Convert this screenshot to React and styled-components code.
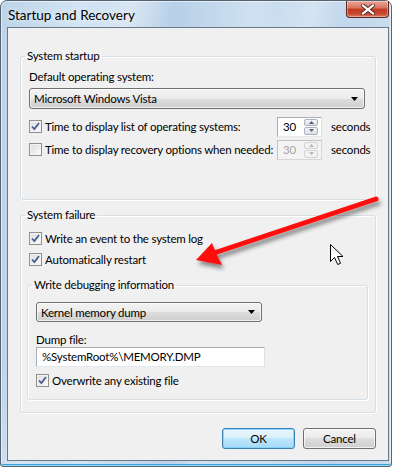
import React from 'react'
import styled, { createGlobalStyle } from 'styled-components'

const GlobalStyle = createGlobalStyle`
  html, body {
    margin: 0;
    padding: 0;
    background: #fff;
  }
  body {
    font-family: Lato, "Noto Sans", sans-serif;
    font-size: 11.5px;
    letter-spacing: -0.2px;
    color: #000;
  }
  * {
    box-sizing: border-box;
  }
`

const Page = styled.div`
  position: relative;
  width: 394px;
  height: 468px;
`

const Window = styled.div`
  width: 392px;
  height: 467px;
  display: flex;
  flex-direction: column;
  padding: 0 2px 5px 6px;
  border: 1px solid #55626f;
  border-radius: 7px 7px 3px 3px;
  background:
    linear-gradient(104deg, rgba(255,255,255,0) 18%, rgba(255,255,255,.35) 26%, rgba(255,255,255,0) 34%,
      rgba(255,255,255,0) 55%, rgba(255,255,255,.3) 62%, rgba(255,255,255,0) 70%),
    linear-gradient(90deg, #bcd3e9 0%, #d3e4f3 20%, #b8d0e8 45%, #cfe1f1 65%, #bed5eb 85%, #c9ddef 100%);
  box-shadow: inset 0 0 0 1px rgba(255,255,255,.55), inset 0 -2px 0 #2fa5dc;
`

const TitleBar = styled.div`
  height: 26px;
  display: flex;
  align-items: flex-start;
  padding-left: 1px;
`

const Title = styled.span`
  line-height: 28px;
  font-size: 13.5px;
  letter-spacing: 0;
  color: #000;
  text-shadow: 0 0 6px rgba(255,255,255,.9);
`

const CloseButton = styled.div`
  margin-left: auto;
  width: 43px;
  height: 17px;
  display: flex;
  align-items: center;
  justify-content: center;
  border: 1px solid #5a2a22;
  border-top: none;
  border-radius: 0 0 4px 4px;
  background: linear-gradient(#e9a597 0%, #d9705e 45%, #c03a22 50%, #c8472f 80%, #dc7a62 100%);
  box-shadow: inset 0 0 0 1px rgba(255,255,255,.35);
`

const Client = styled.div`
  flex: 1;
  display: flex;
  flex-direction: column;
  padding: 20px 12px 0 12px;
  border: 1px solid #6a7987;
  background: #f0f0f0;
`

const Group = styled.fieldset`
  margin: ${(p) => p.$margin || '0'};
  padding: ${(p) => p.$padding};
  min-width: 0;
  border: 1px solid #d5dfe5;
  border-radius: 3px;
  box-shadow: inset 1px 1px 0 #fff, 1px 1px 0 #fff;
  display: flex;
  flex-direction: column;
`

const Legend = styled.legend`
  margin-left: -4px;
  padding: 0 2px;
  line-height: 16px;
`

const Label = styled.div`
  line-height: ${(p) => p.$lh || 16}px;
  margin-top: ${(p) => p.$mt || 0}px;
`

const Combo = styled.div`
  width: ${(p) => p.$width}px;
  height: ${(p) => p.$height}px;
  margin-top: ${(p) => p.$mt}px;
  display: flex;
  align-items: center;
  padding: 0 6px 0 4px;
  border: 1px solid #707070;
  border-radius: 3px;
  background: linear-gradient(#f3f3f3 0%, #ebebeb 50%, #dddddd 50%, #cfcfcf 100%);
  box-shadow: inset 0 0 0 1px rgba(255,255,255,.7);
`

const ComboText = styled.span`
  flex: 1;
`

const TimeRow = styled.div`
  display: grid;
  grid-template-columns: 239px 45px auto;
  column-gap: 9px;
  align-items: center;
  height: 21px;
  margin-top: ${(p) => p.$mt}px;
`

const CheckRow = styled.label`
  display: flex;
  align-items: center;
  gap: 3px;
  height: ${(p) => p.$height || 17}px;
  margin-top: ${(p) => p.$mt || 0}px;
  white-space: nowrap;
`

const Box = styled.span`
  width: 13px;
  height: 13px;
  flex: none;
  display: flex;
  align-items: center;
  justify-content: center;
  border: 1px solid #8e8f8f;
  background: linear-gradient(135deg, #dcdcdc, #fbfbfb);
  box-shadow: inset 0 0 0 1px #f4f4f4;
`

const Spinner = styled.div`
  width: 45px;
  height: 20px;
  display: flex;
  border: 1px solid ${(p) => (p.$disabled ? '#c2c2c2' : '#abadb3')};
  border-right-color: ${(p) => (p.$disabled ? '#d6d6d6' : '#dbdfe6')};
  border-bottom-color: ${(p) => (p.$disabled ? '#d6d6d6' : '#e3e9ef')};
  background: ${(p) => (p.$disabled ? '#f4f4f4' : '#fff')};
  color: ${(p) => (p.$disabled ? '#a3a3a3' : '#000')};
`

const SpinValue = styled.span`
  flex: 1;
  padding-left: 5px;
  line-height: 18px;
`

const SpinButtons = styled.div`
  width: 14px;
  margin: 1px 3px 1px 0;
  display: flex;
  flex-direction: column;
  gap: 1px;
`

const SpinHalf = styled.div`
  flex: 1;
  display: flex;
  align-items: center;
  justify-content: center;
  border: 1px solid ${(p) => (p.$disabled ? '#d2d2d2' : '#a9b3c1')};
  border-radius: 2px;
  background: ${(p) => (p.$disabled ? '#f2f2f2' : 'linear-gradient(#f5f5f5, #dedede)')};
`

const TextField = styled.div`
  width: 229px;
  height: 20px;
  padding-left: 5px;
  line-height: 18px;
  border: 1px solid #abadb3;
  border-right-color: #dbdfe6;
  border-bottom-color: #e3e9ef;
  background: #fff;
`

const ButtonRow = styled.div`
  display: flex;
  justify-content: flex-end;
  gap: 8px;
  margin-top: 15px;
`

const Button = styled.button`
  width: 73px;
  height: 21px;
  padding: 0;
  font: inherit;
  letter-spacing: inherit;
  color: #000;
  border-radius: 3px;
  border: 1px solid ${(p) => (p.$default ? '#3c7fb1' : '#707070')};
  background: ${(p) =>
    p.$default
      ? 'linear-gradient(#eaf6fd 0%, #d9f0fc 50%, #bee6fd 50%, #a7d9f5 100%)'
      : 'linear-gradient(#f3f3f3 0%, #ebebeb 50%, #dddddd 50%, #cfcfcf 100%)'};
  box-shadow: inset 0 0 0 1px ${(p) => (p.$default ? 'rgba(120,210,250,.8)' : 'rgba(255,255,255,.7)')};
`

const Overlay = styled.svg`
  position: absolute;
  left: 0;
  top: 0;
  pointer-events: none;
`

const Arrow = () => (
  <svg width="7" height="4" viewBox="0 0 7 4">
    <path d="M0 0h7L3.5 4z" fill="#000" />
  </svg>
)

const Tick = () => (
  <svg width="9" height="9" viewBox="0 0 9 9">
    <path d="M1 4.5l2.4 2.6L8 1" fill="none" stroke="#4a5d8f" strokeWidth="1.8" />
  </svg>
)

const Check = ({ checked, children }) => (
  <CheckRow>
    <Box>{checked && <Tick />}</Box>
    <span>{children}</span>
  </CheckRow>
)

const SpinBox = ({ value, disabled }) => {
  const c = disabled ? '#b8b8b8' : '#4d6185'
  return (
    <Spinner $disabled={disabled}>
      <SpinValue>{value}</SpinValue>
      <SpinButtons>
        <SpinHalf $disabled={disabled}>
          <svg width="5" height="3" viewBox="0 0 5 3"><path d="M0 3h5L2.5 0z" fill={c} /></svg>
        </SpinHalf>
        <SpinHalf $disabled={disabled}>
          <svg width="5" height="3" viewBox="0 0 5 3"><path d="M0 0h5L2.5 3z" fill={c} /></svg>
        </SpinHalf>
      </SpinButtons>
    </Spinner>
  )
}

const TimeOption = ({ checked, disabled, mt, children }) => (
  <TimeRow $mt={mt}>
    <Check checked={checked}>{children}</Check>
    <SpinBox value="30" disabled={disabled} />
    <span>seconds</span>
  </TimeRow>
)

const App = () => (
  <Page>
    <GlobalStyle />
    <Window>
      <TitleBar>
        <Title>Startup and Recovery</Title>
        <CloseButton>
          <svg width="14" height="11" viewBox="0 0 14 11">
            <path d="M2 1.5l10 8M12 1.5l-10 8" stroke="#5a2a22" strokeWidth="4" strokeLinecap="square" />
            <path d="M2 1.5l10 8M12 1.5l-10 8" stroke="#fff" strokeWidth="2.2" strokeLinecap="square" />
          </svg>
        </CloseButton>
      </TitleBar>
      <Client>
        <Group $padding="5px 8px 39px 8px">
          <Legend>System startup</Legend>
          <Label>Default operating system:</Label>
          <Combo $width={336} $height={21} $mt={3}>
            <ComboText>Microsoft Windows Vista</ComboText>
            <Arrow />
          </Combo>
          <TimeOption checked mt={7}>Time to display list of operating systems:</TimeOption>
          <TimeOption disabled mt={2}>Time to display recovery options when needed:</TimeOption>
        </Group>
        <Group $margin="7px 0 0 0" $padding="7px 8px 12px 8px">
          <Legend>System failure</Legend>
          <Check checked>Write an event to the system log</Check>
          <CheckRow $mt={4}>
            <Box><Tick /></Box>
            <span>Automatically restart</span>
          </CheckRow>
          <Group $margin="9px -1px 0 -2px" $padding="9px 8px 10px 8px">
            <Legend>Write debugging information</Legend>
            <Combo $width={226} $height={20} $mt={0}>
              <ComboText>Kernel memory dump</ComboText>
              <Arrow />
            </Combo>
            <Label $lh={14} $mt={11}>Dump file:</Label>
            <TextField>%SystemRoot%\MEMORY.DMP</TextField>
            <CheckRow $mt={5}>
              <Box><Tick /></Box>
              <span>Overwrite any existing file</span>
            </CheckRow>
          </Group>
        </Group>
        <ButtonRow>
          <Button $default>OK</Button>
          <Button>Cancel</Button>
        </ButtonRow>
      </Client>
    </Window>
    <Overlay width="394" height="468" viewBox="0 0 394 468">
      <defs>
        <filter id="shade" x="-10%" y="-20%" width="130%" height="160%">
          <feDropShadow dx="2" dy="4" stdDeviation="2" floodColor="#000" floodOpacity="0.45" />
        </filter>
      </defs>
      <g filter="url(#shade)">
        <path d="M376 199L214 253" stroke="#ff1010" strokeWidth="5" strokeLinecap="round" />
        <path d="M196 260L212 243L216 253L222 265Z" fill="#ff1010" />
      </g>
      <path
        d="M330.5 244.5v17l4-4l3.2 7l2.8-1.2l-3-6.8h5.5z"
        fill="#fff"
        stroke="#000"
        strokeWidth="1"
        strokeLinejoin="miter"
      />
    </Overlay>
  </Page>
)

export default App
